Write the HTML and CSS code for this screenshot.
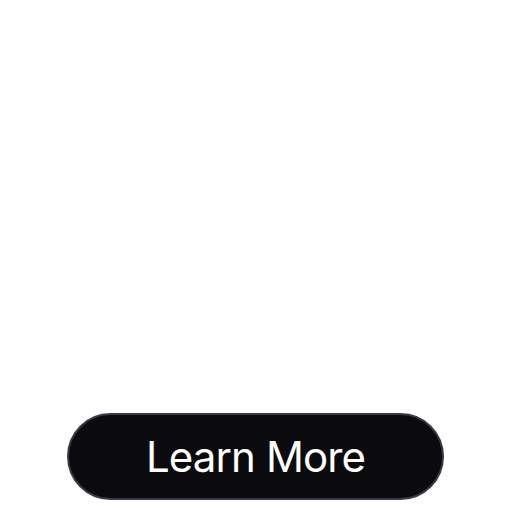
FILE: index.html
```html
<!DOCTYPE html>
<html>
<head>
<meta charset="utf-8">
<link rel="stylesheet" href="styles.css">
</head>
<body>
<main class="page">
  <button class="cta">Learn More</button>
</main>
</body>
</html>
```
FILE: styles.css
```css
html, body {
  margin: 0;
  padding: 0;
  background: #ffffff;
}
.page {
  box-sizing: border-box;
  height: 512px;
  display: flex;
  align-items: flex-end;
  padding: 0 0 12px 67px;
}
.cta {
  box-sizing: border-box;
  width: 377px;
  height: 87px;
  border: 2px solid #3b3849;
  border-radius: 44px;
  background: #0b0b0d;
  color: #ffffff;
  font-family: Inter, "DejaVu Sans", sans-serif;
  font-size: 42px;
  font-weight: 400;
  letter-spacing: -0.9px;
  padding: 0;
  cursor: pointer;
}
```
